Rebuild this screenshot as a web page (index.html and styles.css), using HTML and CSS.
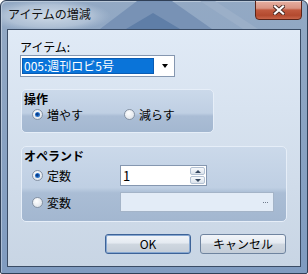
FILE: index.html
```html
<!DOCTYPE html>
<html>
<head>
    <title>アイテムの増減</title>
    <link rel="stylesheet" href="styles.css">
</head>
<body>
    <div class="window">
        <!-- 枠の飾り -->
        <svg class="frame-deco" width="306" height="28" viewBox="0 0 306 28">
            <defs>
                <radialGradient id="glow" cx="0.5" cy="0.5" r="0.5">
                    <stop offset="0" stop-color="#d3deea" stop-opacity="0.95"/>
                    <stop offset="0.7" stop-color="#c2d0e0" stop-opacity="0.6"/>
                    <stop offset="1" stop-color="#b5c6da" stop-opacity="0"/>
                </radialGradient>
            </defs>
            <polygon points="99,28 136,0 171,0 211,28" fill="#7892b5"/>
            <polygon points="199,0 214,0 257,28 242,28" fill="#9bafc8"/>
            <polygon points="125,28 152,12 179,28" fill="#5f7ea7"/>
            <ellipse cx="48" cy="15" rx="62" ry="16" fill="url(#glow)"/>
        </svg>

        <div class="titlebar">
            <div class="title">アイテムの増減</div>
            <div class="close-button">
                <svg width="12" height="10" viewBox="0 0 12 10">
                    <path d="M2 1.5 L10 8.5 M10 1.5 L2 8.5" stroke="#4a2a24" stroke-width="4" stroke-linecap="square"/>
                    <path d="M2 1.5 L10 8.5 M10 1.5 L2 8.5" stroke="#ffffff" stroke-width="2.2" stroke-linecap="square"/>
                </svg>
            </div>
        </div>

        <div class="client">
            <div class="field-label">アイテム:</div>
            <div class="combo">
                <span class="combo-value">005:週刊ロビ5号</span>
                <span class="combo-arrow"></span>
            </div>

            <div class="group group-op">
                <div class="group-title">操作</div>
                <div class="radio-row">
                    <div class="radio checked radio-wide"><span class="radio-dot"></span>増やす</div>
                    <div class="radio"><span class="radio-dot"></span>減らす</div>
                </div>
            </div>

            <div class="group group-operand">
                <div class="group-title">オペランド</div>
                <div class="operand-row">
                    <div class="radio checked operand-radio"><span class="radio-dot"></span>定数</div>
                    <div class="spin">
                        <span class="spin-value">1</span>
                        <div class="spin-buttons">
                            <span class="spin-btn"><span class="tri-up"></span></span>
                            <span class="spin-btn"><span class="tri-down"></span></span>
                        </div>
                    </div>
                </div>
                <div class="operand-row row-var">
                    <div class="radio operand-radio"><span class="radio-dot"></span>変数</div>
                    <div class="var-field"><span class="dots"></span></div>
                </div>
            </div>

            <div class="buttons">
                <button class="btn btn-default">OK</button>
                <button class="btn">キャンセル</button>
            </div>
        </div>
    </div>
</body>
</html>
```

FILE: styles.css
```css
/* ページ全体 */
body {
    margin: 0;
    font-family: "Noto Sans CJK JP", "Liberation Sans", sans-serif;
    font-size: 12px;
    color: #000;
}

/* ウィンドウ枠 */
.window {
    position: relative;
    width: 308px;
    height: 274px;
    box-sizing: border-box;
    border: 1px solid #2f3f56;
    border-radius: 6px 6px 2px 2px;
    background: linear-gradient(to bottom, #93a9c4, #7f9bc0);
    box-shadow: inset 1px 1px 0 rgba(255, 255, 255, 0.35);
    padding: 0 6px 6px;
    display: flex;
    flex-direction: column;
    overflow: hidden;
}

.frame-deco {
    position: absolute;
    top: 0;
    left: 0;
}

.titlebar {
    position: relative;
    height: 28px;
    display: flex;
    justify-content: space-between;
    align-items: flex-start;
}

.title {
    padding: 6px 0 0 1px;
    line-height: 13px;
    color: #111;
}

.close-button {
    width: 47px;
    height: 20px;
    box-sizing: border-box;
    margin: -1px -1px 0 0;
    border: 1px solid #5c2418;
    border-radius: 0 0 4px 4px;
    background: linear-gradient(to bottom, #e6b0a2 0%, #d99483 40%, #c15a3f 50%, #b34a2f 80%, #c8654a 100%);
    box-shadow: inset 0 1px 0 rgba(255, 255, 255, 0.5);
    display: flex;
    justify-content: center;
    align-items: center;
}

/* クライアント領域 */
.client {
    height: 238px;
    box-sizing: border-box;
    border: 1px solid #3a4c65;
    background: linear-gradient(to bottom, #e0eaf6, #c8d5e4);
    padding: 10px 13px 0 12px;
    display: flex;
    flex-direction: column;
}

.field-label {
    line-height: 14px;
}

.combo {
    width: 155px;
    height: 22px;
    box-sizing: border-box;
    margin-top: 1px;
    border: 1px solid #8597b0;
    background-color: #fff;
    display: flex;
    align-items: center;
    padding-left: 1px;
}

.combo-value {
    width: 132px;
    height: 16px;
    box-sizing: border-box;
    background-color: #0a74d9;
    border: 1px solid #0a5cb4;
    color: #fff;
    line-height: 14px;
    padding-left: 1px;
}

.combo-arrow {
    margin-left: 8px;
    border-left: 3px solid transparent;
    border-right: 3px solid transparent;
    border-top: 4px solid #000;
}

/* グループ */
.group {
    margin-left: 1px;
    box-sizing: border-box;
    border: 1px solid #e6eef8;
    border-radius: 5px;
    background: linear-gradient(to bottom, #cbd9ea 0%, #bfcfe3 55%, #aabdd5 62%, #a3b7d0 100%);
    padding: 2px 0 0 2px;
}

.group-op {
    width: 193px;
    height: 44px;
    margin-top: 12px;
}

.group-operand {
    width: 266px;
    height: 76px;
    margin-top: 13px;
}

.group-title {
    font-weight: bold;
    line-height: 13px;
}

.radio-row {
    display: flex;
    margin-top: 3px;
    padding-left: 8px;
}

.radio {
    display: flex;
    align-items: center;
    gap: 4px;
    line-height: 13px;
}

.radio-wide {
    width: 92px;
}

.radio-dot {
    position: relative;
    width: 11px;
    height: 11px;
    box-sizing: border-box;
    border: 1px solid #8592a3;
    border-radius: 50%;
    background: radial-gradient(circle at 40% 35%, #ffffff, #d6dce4);
}

.radio.checked .radio-dot::after {
    content: "";
    position: absolute;
    top: 2px;
    left: 2px;
    width: 5px;
    height: 5px;
    border-radius: 50%;
    background: radial-gradient(circle at 45% 45%, #0b3c8a 0 1px, #2f7fd6 2px, #1c5fb0 3px);
}

.operand-row {
    display: flex;
    align-items: center;
    margin-top: 3px;
    padding-left: 8px;
}

.row-var {
    margin-top: 6px;
}

.operand-radio {
    width: 88px;
}

.spin {
    width: 87px;
    height: 21px;
    box-sizing: border-box;
    border: 1px solid #8597b0;
    background-color: #fff;
    display: flex;
    justify-content: space-between;
    align-items: center;
    padding: 0 1px 0 2px;
    font-size: 13px;
}

.spin-buttons {
    display: flex;
    flex-direction: column;
    gap: 1px;
}

.spin-btn {
    width: 15px;
    height: 8px;
    box-sizing: border-box;
    border: 1px solid #b3c1d3;
    border-radius: 2px;
    background: linear-gradient(to bottom, #f7f9fc, #dbe3ec);
    display: flex;
    justify-content: center;
    align-items: center;
}

.tri-up {
    border-left: 3px solid transparent;
    border-right: 3px solid transparent;
    border-bottom: 3px solid #34465e;
}

.tri-down {
    border-left: 3px solid transparent;
    border-right: 3px solid transparent;
    border-top: 3px solid #34465e;
}

.var-field {
    width: 154px;
    height: 20px;
    box-sizing: border-box;
    border: 1px solid #a4b4c8;
    background-color: #e3ecf7;
    display: flex;
    justify-content: flex-end;
    align-items: center;
    padding: 1px 9px 0 0;
}

.dots {
    width: 1px;
    height: 1px;
    background-color: #6f7b8c;
    box-shadow: 2px 0 #6f7b8c, 4px 0 #6f7b8c;
}

/* ボタン */
.buttons {
    display: flex;
    justify-content: flex-end;
    gap: 9px;
    margin-top: 12px;
    margin-right: 1px;
}

.btn {
    width: 86px;
    height: 20px;
    box-sizing: border-box;
    padding: 0;
    border: 1px solid #6f849f;
    border-radius: 3px;
    background: linear-gradient(to bottom, #f2f5f9 0%, #e4eaf1 45%, #cfd7e0 50%, #c4cdd8 100%);
    font-family: "Noto Sans CJK JP", "Liberation Sans", sans-serif;
    font-size: 12px;
    line-height: 16px;
    color: #000;
}

.btn-default {
    border-color: #3d6398;
    box-shadow: inset 0 0 0 1px #86a7d1;
}
```
